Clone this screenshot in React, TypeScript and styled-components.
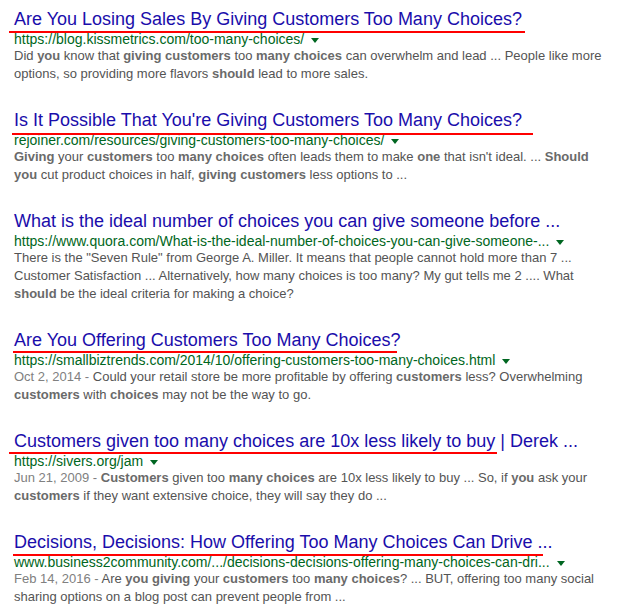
import styled, { createGlobalStyle } from "styled-components";

type Part = string | { b: string };

type Result = {
  title: string;
  url: string;
  date?: string;
  snippet: Part[];
  mark?: { top: number; left: number; width: number };
};

const results: Result[] = [
  {
    title: "Are You Losing Sales By Giving Customers Too Many Choices?",
    url: "https://blog.kissmetrics.com/too-many-choices/",
    snippet: [
      "Did ",
      { b: "you" },
      " know that ",
      { b: "giving customers" },
      " too ",
      { b: "many choices" },
      " can overwhelm and lead ... People like more options, so providing more flavors ",
      { b: "should" },
      " lead to more sales.",
    ],
    mark: { top: 22, left: -5, width: 516 },
  },
  {
    title: "Is It Possible That You're Giving Customers Too Many Choices?",
    url: "rejoiner.com/resources/giving-customers-too-many-choices/",
    snippet: [
      { b: "Giving" },
      " your ",
      { b: "customers" },
      " too ",
      { b: "many choices" },
      " often leads them to make ",
      { b: "one" },
      " that isn't ideal. ... ",
      { b: "Should you" },
      " cut product choices in half, ",
      { b: "giving customers" },
      " less options to ...",
    ],
    mark: { top: 23, left: -2, width: 521 },
  },
  {
    title: "What is the ideal number of choices you can give someone before ...",
    url: "https://www.quora.com/What-is-the-ideal-number-of-choices-you-can-give-someone-...",
    snippet: [
      'There is the "Seven Rule" from George A. Miller. It means that people cannot hold more than 7 ... Customer Satisfaction ... Alternatively, how many choices is too many? My gut tells me 2 .... What ',
      { b: "should" },
      " be the ideal criteria for making a choice?",
    ],
  },
  {
    title: "Are You Offering Customers Too Many Choices?",
    url: "https://smallbiztrends.com/2014/10/offering-customers-too-many-choices.html",
    date: "Oct 2, 2014",
    snippet: [
      "Could your retail store be more profitable by offering ",
      { b: "customers" },
      " less? Overwhelming ",
      { b: "customers" },
      " with ",
      { b: "choices" },
      " may not be the way to go.",
    ],
    mark: { top: 21, left: -1, width: 384 },
  },
  {
    title: "Customers given too many choices are 10x less likely to buy | Derek ...",
    url: "https://sivers.org/jam",
    date: "Jun 21, 2009",
    snippet: [
      { b: "Customers" },
      " given too ",
      { b: "many choices" },
      " are 10x less likely to buy ... So, if ",
      { b: "you" },
      " ask your ",
      { b: "customers" },
      " if they want extensive choice, they will say they do ...",
    ],
    mark: { top: 21, left: -5, width: 488 },
  },
  {
    title: "Decisions, Decisions: How Offering Too Many Choices Can Drive ...",
    url: "www.business2community.com/.../decisions-decisions-offering-many-choices-can-dri...",
    date: "Feb 14, 2016",
    snippet: [
      "Are ",
      { b: "you giving" },
      " your ",
      { b: "customers" },
      " too ",
      { b: "many choices" },
      "? ... BUT, offering too many social sharing options on a blog post can prevent people from ...",
    ],
    mark: { top: 22, left: -1, width: 530 },
  },
];

const GlobalStyle = createGlobalStyle`
  body {
    margin: 0;
    background: #fff;
    font-family: "Liberation Sans", Arial, sans-serif;
  }
`;

const List = styled.div`
  padding: 9px 0 0 14px;
`;

const Item = styled.div`
  margin-bottom: 27px;
`;

const TitleRow = styled.div`
  position: relative;
`;

const Title = styled.a`
  display: block;
  font-size: 18px;
  line-height: 21.6px;
  color: #1a0dab;
  text-decoration: none;
  white-space: nowrap;
  cursor: pointer;
`;

const Mark = styled.span<{ $top: number; $left: number; $width: number }>`
  position: absolute;
  top: ${(p) => p.$top}px;
  left: ${(p) => p.$left}px;
  width: ${(p) => p.$width}px;
  height: 2px;
  background: #ff0000;
`;

const UrlRow = styled.div`
  font-size: 14px;
  line-height: 16px;
  color: #006621;
  white-space: nowrap;
`;

const Arrow = styled.span`
  display: inline-block;
  margin-left: 7px;
  vertical-align: 1px;
  border-top: 5px solid #006621;
  border-left: 4px solid transparent;
  border-right: 4px solid transparent;
`;

const Snippet = styled.div`
  width: 597px;
  font-size: 13px;
  line-height: 18.2px;
  color: #545454;
`;

const Strong = styled.b`
  color: #6a6a6a;
`;

const DateText = styled.span`
  color: #808080;
`;

export default function App() {
  return (
    <>
      <GlobalStyle />
      <List>
        {results.map((r) => (
          <Item key={r.url}>
            <TitleRow>
              <Title>{r.title}</Title>
              {r.mark && (
                <Mark $top={r.mark.top} $left={r.mark.left} $width={r.mark.width} />
              )}
            </TitleRow>
            <UrlRow>
              {r.url}
              <Arrow />
            </UrlRow>
            <Snippet>
              {r.date && <DateText>{r.date} - </DateText>}
              {r.snippet.map((p, i) =>
                typeof p === "string" ? p : <Strong key={i}>{p.b}</Strong>
              )}
            </Snippet>
          </Item>
        ))}
      </List>
    </>
  );
}
